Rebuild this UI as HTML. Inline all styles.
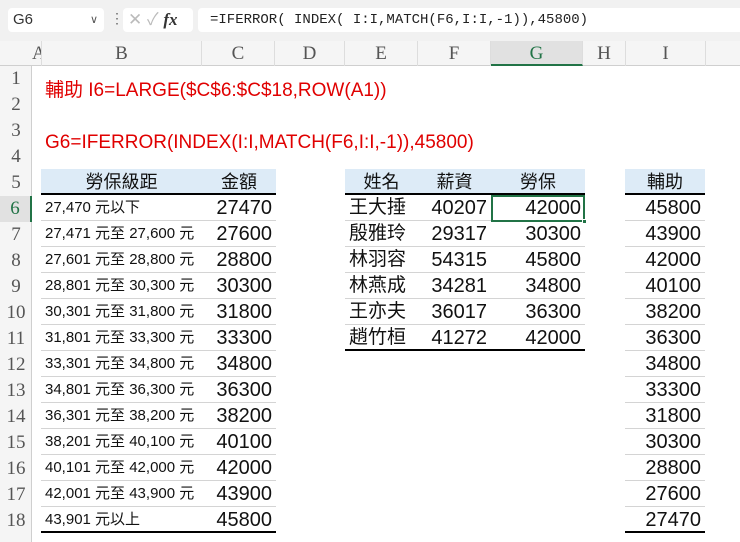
<!DOCTYPE html>
<html><head><meta charset="utf-8"><style>
*{margin:0;padding:0;box-sizing:border-box}
body{width:740px;height:542px;overflow:hidden;background:#fff;position:relative;font-family:"Liberation Sans","Noto Sans CJK TC",sans-serif}
.a{position:absolute}
.rh{position:absolute;left:0;width:32px;height:26px;text-align:center;font:19px/26px "Liberation Serif",serif;color:#555}
.ch{position:absolute;top:41px;height:25px;text-align:center;font:19px/26px "Liberation Serif",serif;color:#555;border-right:1px solid #ddd}
.tb{position:absolute}
.r{display:flex;height:26px;border-bottom:1px solid #d4d4d4;color:#111;align-items:center;overflow:hidden;padding-top:1px}
.r>div{padding:0 4px;white-space:nowrap;line-height:20px}
.r.h{height:26px;background:#ddebf7;border-bottom:2px solid #000;font-size:18px}
.r.h>div{text-align:center}
.r.l{border-bottom:2px solid #000}
.n{font-size:20px;text-align:right}
.t{font-size:15px}
.nm{font-size:19px}
.red{position:absolute;left:45px;color:#e00000;font-size:19px;line-height:24px}
</style></head><body>
<div class="a" style="left:0;top:0;width:740px;height:41px;background:#f1f1f1"></div>
<div class="a" style="left:8px;top:8px;width:96px;height:24px;background:#fff;border-radius:4px;font:15px/24px 'Liberation Sans',sans-serif;color:#333;padding-left:5px">G6<span style="position:absolute;right:6px;font-size:11px;color:#555">&#8744;</span></div>
<div class="a" style="left:110px;top:10px;color:#666;font-size:14px">&#8942;</div>
<div class="a" style="left:123px;top:8px;width:70px;height:24px;background:#fff;border-radius:4px;color:#bbb;font-size:17px;line-height:24px;padding-left:5px">&#10005;&nbsp;&#10003;&nbsp;<i style="color:#333;font-family:'Liberation Serif',serif;font-weight:bold">fx</i></div>
<div class="a" style="left:198px;top:8px;width:542px;height:24px;background:#fff;border-radius:4px 0 0 4px;font:14px/24px 'Liberation Mono',monospace;color:#222;padding-left:12px">=IFERROR( INDEX( I:I,MATCH(F6,I:I,-1)),45800)</div>
<div class="a" style="left:0;top:41px;width:740px;height:25px;background:#f5f5f5;border-bottom:1px solid #cfcfcf"></div>
<div class="a" style="left:0;top:66px;width:32px;height:476px;background:#f5f5f5;border-right:1px solid #cfcfcf"></div>
<div class="ch" style="left:32px;width:10px;text-align:left;overflow:hidden">A</div>
<div class="ch" style="left:42px;width:160px">B</div>
<div class="ch" style="left:202px;width:73px">C</div>
<div class="ch" style="left:275px;width:70px">D</div>
<div class="ch" style="left:345px;width:73px">E</div>
<div class="ch" style="left:418px;width:73px">F</div>
<div class="ch" style="left:491px;width:92px;background:#e1e1e1;color:#217346;border-bottom:2px solid #217346">G</div>
<div class="ch" style="left:583px;width:43px">H</div>
<div class="ch" style="left:626px;width:80px">I</div>
<div class="rh" style="top:66px">1</div><div class="rh" style="top:92px">2</div><div class="rh" style="top:118px">3</div><div class="rh" style="top:144px">4</div><div class="rh" style="top:170px">5</div>
<div class="rh" style="top:196px;background:#e1e1e1;color:#217346;border-right:2px solid #217346">6</div>
<div class="rh" style="top:222px">7</div><div class="rh" style="top:248px">8</div><div class="rh" style="top:274px">9</div><div class="rh" style="top:300px">10</div><div class="rh" style="top:326px">11</div><div class="rh" style="top:352px">12</div><div class="rh" style="top:378px">13</div><div class="rh" style="top:404px">14</div><div class="rh" style="top:430px">15</div><div class="rh" style="top:456px">16</div><div class="rh" style="top:482px">17</div><div class="rh" style="top:508px">18</div>
<div class="red" style="top:79px">輔助 I6=LARGE($C$6:$C$18,ROW(A1))</div>
<div class="red" style="top:131px">G6=IFERROR(INDEX(I:I,MATCH(F6,I:I,-1)),45800)</div>

<div class="tb" style="left:41px;top:169px;width:235px">
<div class="r h"><div style="width:161px">勞保級距</div><div style="width:74px">金額</div></div>
<div class="r"><div class="t" style="width:161px">27,470 元以下</div><div class="n" style="width:74px">27470</div></div>
<div class="r"><div class="t" style="width:161px">27,471 元至 27,600 元</div><div class="n" style="width:74px">27600</div></div>
<div class="r"><div class="t" style="width:161px">27,601 元至 28,800 元</div><div class="n" style="width:74px">28800</div></div>
<div class="r"><div class="t" style="width:161px">28,801 元至 30,300 元</div><div class="n" style="width:74px">30300</div></div>
<div class="r"><div class="t" style="width:161px">30,301 元至 31,800 元</div><div class="n" style="width:74px">31800</div></div>
<div class="r"><div class="t" style="width:161px">31,801 元至 33,300 元</div><div class="n" style="width:74px">33300</div></div>
<div class="r"><div class="t" style="width:161px">33,301 元至 34,800 元</div><div class="n" style="width:74px">34800</div></div>
<div class="r"><div class="t" style="width:161px">34,801 元至 36,300 元</div><div class="n" style="width:74px">36300</div></div>
<div class="r"><div class="t" style="width:161px">36,301 元至 38,200 元</div><div class="n" style="width:74px">38200</div></div>
<div class="r"><div class="t" style="width:161px">38,201 元至 40,100 元</div><div class="n" style="width:74px">40100</div></div>
<div class="r"><div class="t" style="width:161px">40,101 元至 42,000 元</div><div class="n" style="width:74px">42000</div></div>
<div class="r"><div class="t" style="width:161px">42,001 元至 43,900 元</div><div class="n" style="width:74px">43900</div></div>
<div class="r l"><div class="t" style="width:161px">43,901 元以上</div><div class="n" style="width:74px">45800</div></div>
</div>

<div class="tb" style="left:345px;top:169px;width:240px">
<div class="r h"><div style="width:73px">姓名</div><div style="width:73px">薪資</div><div style="width:94px">勞保</div></div>
<div class="r"><div class="nm" style="width:73px">王大捶</div><div class="n" style="width:73px">40207</div><div class="n" style="width:94px">42000</div></div>
<div class="r"><div class="nm" style="width:73px">殷雅玲</div><div class="n" style="width:73px">29317</div><div class="n" style="width:94px">30300</div></div>
<div class="r"><div class="nm" style="width:73px">林羽容</div><div class="n" style="width:73px">54315</div><div class="n" style="width:94px">45800</div></div>
<div class="r"><div class="nm" style="width:73px">林燕成</div><div class="n" style="width:73px">34281</div><div class="n" style="width:94px">34800</div></div>
<div class="r"><div class="nm" style="width:73px">王亦夫</div><div class="n" style="width:73px">36017</div><div class="n" style="width:94px">36300</div></div>
<div class="r l"><div class="nm" style="width:73px">趙竹桓</div><div class="n" style="width:73px">41272</div><div class="n" style="width:94px">42000</div></div>
</div>

<div class="tb" style="left:625px;top:169px;width:80px">
<div class="r h"><div style="width:80px">輔助</div></div>
<div class="r"><div class="n" style="width:80px">45800</div></div>
<div class="r"><div class="n" style="width:80px">43900</div></div>
<div class="r"><div class="n" style="width:80px">42000</div></div>
<div class="r"><div class="n" style="width:80px">40100</div></div>
<div class="r"><div class="n" style="width:80px">38200</div></div>
<div class="r"><div class="n" style="width:80px">36300</div></div>
<div class="r"><div class="n" style="width:80px">34800</div></div>
<div class="r"><div class="n" style="width:80px">33300</div></div>
<div class="r"><div class="n" style="width:80px">31800</div></div>
<div class="r"><div class="n" style="width:80px">30300</div></div>
<div class="r"><div class="n" style="width:80px">28800</div></div>
<div class="r"><div class="n" style="width:80px">27600</div></div>
<div class="r l"><div class="n" style="width:80px">27470</div></div>
</div>
<div class="a" style="left:491px;top:195px;width:94px;height:27px;border:2px solid #217346"></div>
<div class="a" style="left:582px;top:219px;width:5px;height:5px;background:#217346;border:1px solid #fff"></div>
</body></html>
